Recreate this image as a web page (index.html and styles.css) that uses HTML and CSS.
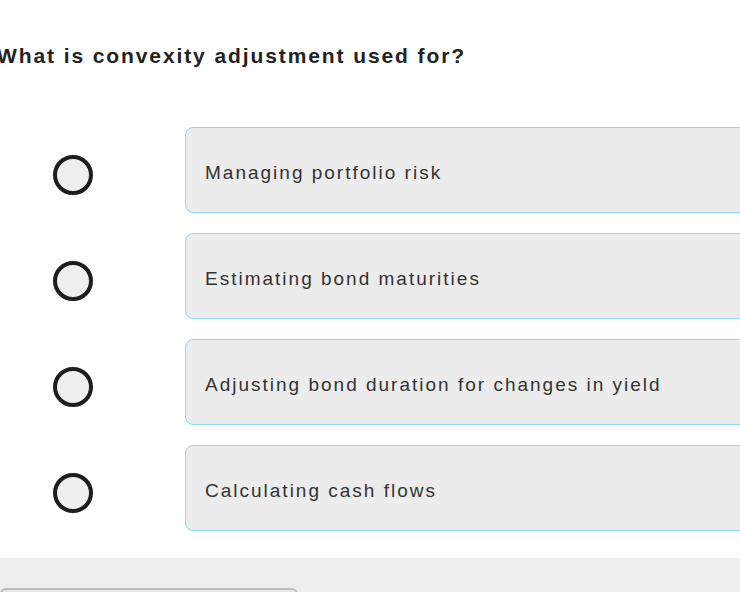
FILE: index.html
```html
<!DOCTYPE html>
<html lang="en">
<head>
    <meta charset="UTF-8">
    <meta name="viewport" content="width=device-width, initial-scale=1.0">
    <title>Quiz question</title>
    <link rel="stylesheet" href="styles.css">
</head>
<body>
    <div class="quiz">
        <h2 class="question">What is convexity adjustment used for?</h2>

        <ul class="options">
            <li class="option">
                <span class="radio"></span>
                <div class="answer">Managing portfolio risk</div>
            </li>
            <li class="option">
                <span class="radio"></span>
                <div class="answer">Estimating bond maturities</div>
            </li>
            <li class="option">
                <span class="radio"></span>
                <div class="answer">Adjusting bond duration for changes in yield</div>
            </li>
            <li class="option">
                <span class="radio"></span>
                <div class="answer">Calculating cash flows</div>
            </li>
        </ul>
    </div>

    <div class="footer">
        <button class="next" type="button"></button>
    </div>
</body>
</html>
```

FILE: styles.css
```css
html, body {
    margin: 0;
    padding: 0;
    overflow: hidden;
}
body {
    font-family: "Liberation Sans", Arial, sans-serif;
    background: #fff;
    width: 740px;
    height: 592px;
}
.quiz {
    padding-top: 42px;
    height: 516px;
}
.question {
    margin: 0 0 0 -3px;
    font-size: 21px;
    font-weight: bold;
    color: #222;
    line-height: 28px;
    letter-spacing: 1.9px;
}
.options {
    list-style: none;
    margin: 57px 0 0 0;
    padding: 0;
    display: flex;
    flex-direction: column;
    gap: 20px;
}
.option {
    display: grid;
    grid-template-columns: 185px 620px;
    align-items: center;
}
.radio {
    justify-self: center;
    width: 32px;
    height: 32px;
    margin: 10px 0 0 -40px;
    border: 4px solid #1e1e1e;
    border-radius: 50%;
    background: #efefef;
}
.answer {
    height: 86px;
    box-sizing: border-box;
    display: flex;
    align-items: center;
    padding: 5px 0 0 19px;
    background: #ececec;
    border: 1px solid #95d5ee;
    border-radius: 8px;
    font-size: 19px;
    color: #333;
    letter-spacing: 2px;
}
.footer {
    background: #efeded;
    height: 34px;
    padding-top: 30px;
}
.next {
    display: block;
    width: 298px;
    height: 40px;
    background: #e6e6e6;
    border: 2px solid #bdbdbd;
    border-radius: 6px;
}
```
